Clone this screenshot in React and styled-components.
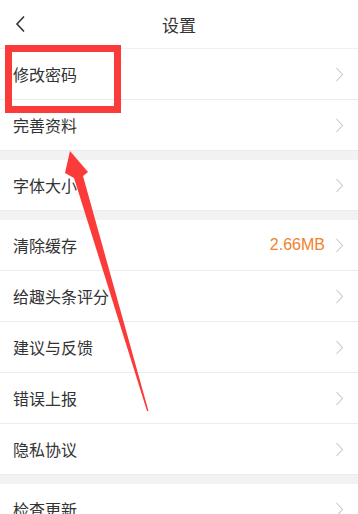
import React from "react";
import styled, { createGlobalStyle } from "styled-components";

const Global = createGlobalStyle`
  html, body {
    margin: 0;
    padding: 0;
    background: #ffffff;
  }
  body {
    font-family: "Noto Sans CJK SC", "Liberation Sans", sans-serif;
    -webkit-font-smoothing: antialiased;
  }
`;

const Page = styled.div`
  position: relative;
  width: 358px;
  height: 514px;
  overflow: hidden;
  background: #f2f2f2;
`;

const Header = styled.header`
  height: 48px;
  display: flex;
  align-items: center;
  justify-content: center;
  position: relative;
  background: #ffffff;
  border-bottom: 1px solid #f0f0f0;
  h1 {
    margin: 0;
    font-size: 17px;
    font-weight: 400;
    color: #333333;
    letter-spacing: 0;
  }
`;

const BackButton = styled.button`
  position: absolute;
  left: 10px;
  top: 12px;
  width: 20px;
  height: 24px;
  padding: 0;
  border: 0;
  background: none;
  display: flex;
  align-items: center;
  justify-content: center;
`;

const Group = styled.section`
  background: #ffffff;
  margin-bottom: ${(p) => (p.$last ? 0 : "9px")};
`;

const Row = styled.div`
  height: 50px;
  display: flex;
  align-items: center;
  padding: 0 14px 0 13px;
  border-bottom: 1px solid #ececec;
  .label {
    flex: 1;
    font-size: 16px;
    color: #333333;
    line-height: 1;
  }
  .value {
    font-family: "Liberation Sans", Arial, sans-serif;
    font-size: 16px;
    color: #f0822d;
    margin-right: 10px;
  }
`;

const Overlay = styled.svg`
  position: absolute;
  left: 0;
  top: 0;
  pointer-events: none;
`;

function Chevron() {
  return (
    <svg width="9" height="15" viewBox="0 0 9 15">
      <path d="M1.5 1 L7.5 7.5 L1.5 14" fill="none" stroke="#c8c8c8" strokeWidth="1.1" />
    </svg>
  );
}

const groups = [
  [{ label: "修改密码" }, { label: "完善资料" }],
  [{ label: "字体大小" }],
  [
    { label: "清除缓存", value: "2.66MB" },
    { label: "给趣头条评分" },
    { label: "建议与反馈" },
    { label: "错误上报" },
    { label: "隐私协议" },
  ],
  [{ label: "检查更新" }],
];

function App() {
  return (
    <>
      <Global />
      <Page>
        <Header>
          <BackButton aria-label="返回">
            <svg width="12" height="18" viewBox="0 0 12 18">
              <path d="M10 1.5 L3 9 L10 16.5" fill="none" stroke="#333" strokeWidth="1.6" />
            </svg>
          </BackButton>
          <h1>设置</h1>
        </Header>
        {groups.map((rows, i) => (
          <Group key={i} $last={i === groups.length - 1}>
            {rows.map((r) => (
              <Row key={r.label}>
                <span className="label">{r.label}</span>
                {r.value && <span className="value">{r.value}</span>}
                <Chevron />
              </Row>
            ))}
          </Group>
        ))}
        <Overlay width="358" height="514" viewBox="0 0 358 514">
          <rect x="8.5" y="48.5" width="109" height="61" fill="none" stroke="#fb3a3a" strokeWidth="7" />
          <polygon
            points="70,151 88,172 83,176 148.5,411 147,411 74,178 65,173"
            fill="#fb3a3a"
          />
        </Overlay>
      </Page>
    </>
  );
}

export default App;
